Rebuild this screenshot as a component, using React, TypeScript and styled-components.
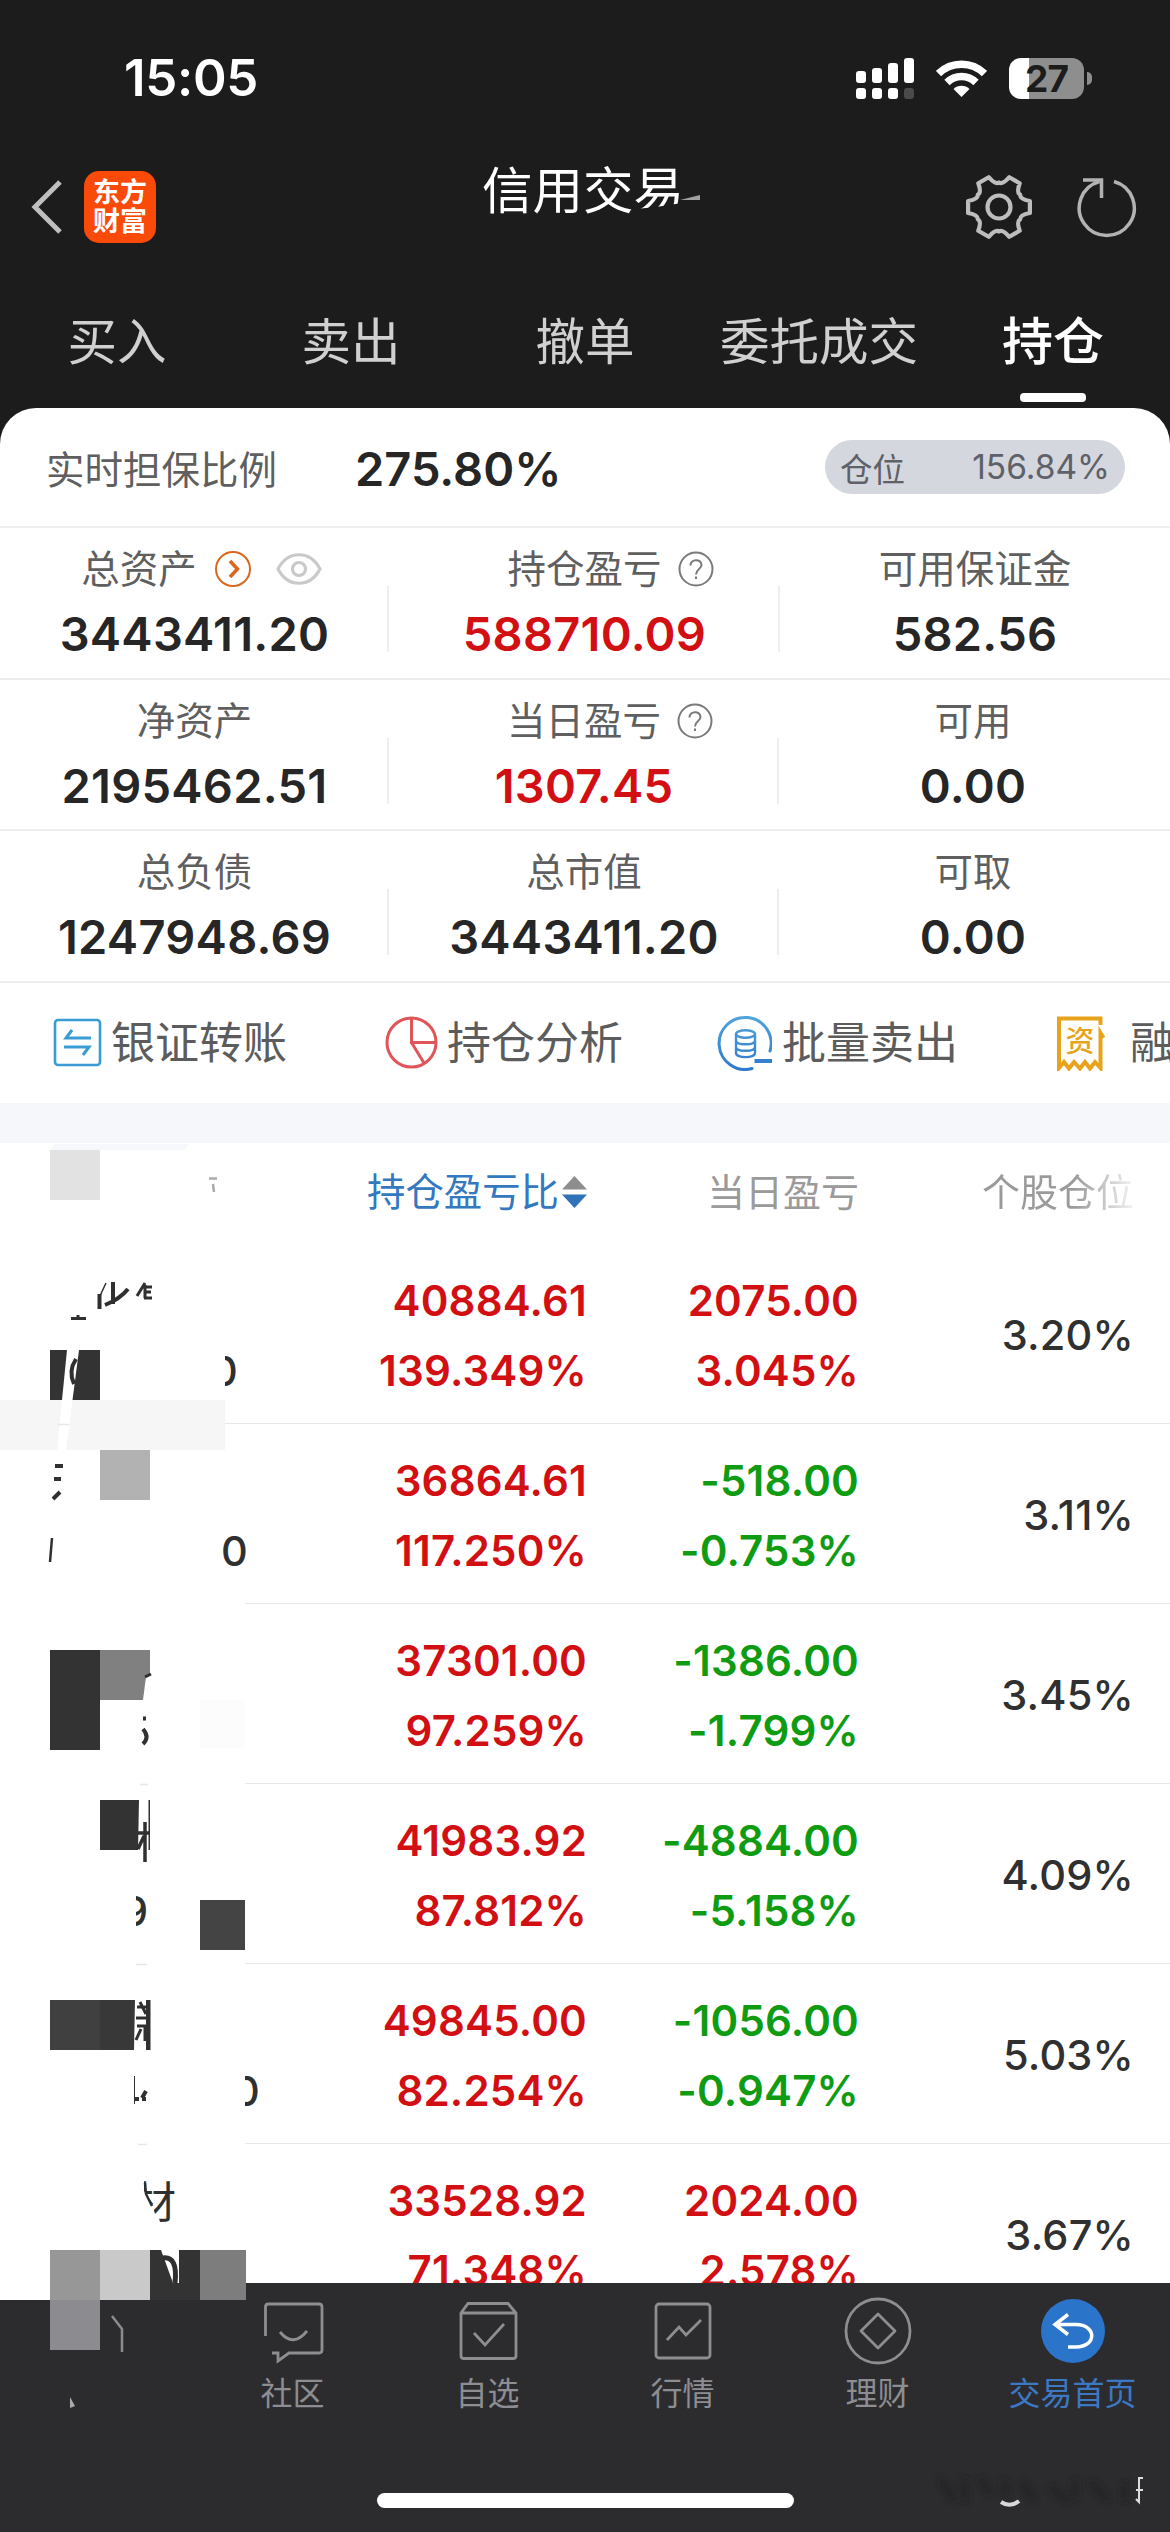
import React from "react";
import styled, { createGlobalStyle } from "styled-components";

const RED = "#d20f12";
const GREEN = "#0f9c12";
const INK = "#262626";

const GlobalStyle = createGlobalStyle`
  * { box-sizing: border-box; }
  body {
    margin: 0;
    background: #fff;
    font-family: Inter, "Noto Sans CJK SC", sans-serif;
    font-kerning: normal;
  }
`;

const Page = styled.div`
  position: relative;
  width: 1170px;
  height: 2532px;
  overflow: hidden;
  display: flex;
  flex-direction: column;
  background: #1c1c1c;
`;

/* ---------- status bar ---------- */

const StatusBar = styled.div`
  height: 156px;
  flex: none;
  display: flex;
  align-items: center;
  justify-content: space-between;
  padding: 0 78px 0 124px;
`;

const Clock = styled.span`
  font-size: 51px;
  line-height: 60px;
  font-weight: 600;
  letter-spacing: -0.3px;
  color: #fff;
`;

const StatusIcons = styled.div`
  display: flex;
  align-items: center;
`;

const Signal = styled.svg`
  width: 58px;
  height: 41px;
  margin-right: 22px;
`;

const Wifi = styled.svg`
  width: 51px;
  height: 38px;
  margin-right: 22px;
`;

const Battery = styled.div`
  width: 75px;
  height: 41px;
  border-radius: 12px;
  background: linear-gradient(to right, #fff 20px, #8e8e8e 20px);
  color: #1c1c1c;
  font-size: 37px;
  line-height: 41px;
  font-weight: 700;
  text-align: center;
  letter-spacing: -1px;
`;

const BatteryNub = styled.span`
  width: 5px;
  height: 13px;
  margin-left: 3px;
  border-radius: 0 5px 5px 0;
  background: #8e8e8e;
`;

/* ---------- title bar ---------- */

const TitleBar = styled.div`
  height: 102px;
  flex: none;
  display: grid;
  grid-template-columns: 390px 390px 390px;
`;

const TitleLeft = styled.div`
  display: flex;
  align-items: center;
  padding-left: 30px;
  gap: 20px;
`;

const Chevron = styled.svg`
  width: 34px;
  height: 56px;
`;

const AppBadge = styled.div`
  width: 72px;
  height: 72px;
  border-radius: 15px;
  background: #fa4a0a;
  color: #fff;
  font-weight: 700;
  font-size: 27px;
  line-height: 29px;
  padding-top: 7px;
  text-align: center;
`;

const Title = styled.div`
  position: relative;
  text-align: center;
  font-size: 50.5px;
  line-height: 70px;
  color: #fff;
  padding-right: 4px;
  font-weight: 400;
`;

const TitleSmudge = styled.svg`
  position: absolute;
  left: 246px;
  top: 35px;
  width: 72px;
  height: 32px;
`;

const TitleActions = styled.div`
  display: flex;
  align-items: center;
  justify-content: flex-end;
  padding-right: 29px;
  gap: 41px;
`;

const Gear = styled.svg`
  width: 70px;
  height: 70px;
`;

const Refresh = styled.svg`
  width: 66px;
  height: 66px;
`;

/* ---------- tabs ---------- */

const Tabs = styled.div`
  height: 150px;
  flex: none;
  display: grid;
  grid-template-columns: repeat(5, 234px);
`;

const Tab = styled.div<{ $active?: boolean }>`
  display: flex;
  flex-direction: column;
  align-items: center;
  padding-top: 54px;
  font-size: ${(p) => (p.$active ? 51 : 49.5)}px;
  line-height: 60px;
  color: ${(p) => (p.$active ? "#fff" : "#d0d0d0")};
  font-weight: ${(p) => (p.$active ? 500 : 400)};

  &::after {
    content: "";
    display: ${(p) => (p.$active ? "block" : "none")};
    width: 66px;
    height: 9px;
    margin-top: 21px;
    border-radius: 4px;
    background: #fff;
  }
`;

/* ---------- account summary ---------- */

const Sheet = styled.main`
  height: 1875px;
  flex: none;
  overflow: hidden;
  background: #fff;
  border-radius: 36px 36px 0 0;
`;

const RatioRow = styled.div`
  height: 120px;
  display: flex;
  align-items: center;
  padding: 0 45px 0 46px;
  border-bottom: 2px solid #efefef;
  color: #5f5f5f;
  font-size: 38.5px;
`;

const RatioValue = styled.strong`
  margin: 3px 0 0 78px;
  font-size: 47px;
  font-weight: 600;
  color: ${INK};
`;

const PositionPill = styled.div`
  margin-left: auto;
  width: 300px;
  height: 54px;
  border-radius: 27px;
  padding: 0 15px;
  display: flex;
  align-items: center;
  justify-content: space-between;
  background: #d4d7dd;
  color: #5f6168;
  font-size: 32.5px;
`;

const PillValue = styled.span`
  font-size: 33.5px;
`;

const StatsRow = styled.section<{ $wide?: boolean }>`
  height: 151.6px;
  display: grid;
  grid-template-columns: ${(p) => (p.$wide ? "389px 391px 390px" : "389px 390px 388px")};
  border-bottom: 2px solid #ededed;
`;

const Stat = styled.div`
  display: flex;
  flex-direction: column;
  align-items: center;
  padding-top: 19px;
  background: linear-gradient(#eeeeee, #eeeeee) right 58px / 2px 66px no-repeat;

  &:last-child { background: none; }
`;

const StatLabel = styled.div`
  position: relative;
  display: flex;
  align-items: center;
  height: 44px;
  font-size: 38.5px;
  line-height: 44px;
  color: #5f5f5f;
`;

const LabelIcons = styled.span`
  position: absolute;
  left: 100%;
  top: 4px;
  padding-left: 16px;
  display: flex;
`;

const InlineIcons = styled.span`
  display: flex;
  align-items: center;
  gap: 24px;
  padding-left: 17px;
  margin-right: -14px;
`;

const StatValue = styled.div<{ $color?: string }>`
  margin-top: 15px;
  font-size: 47px;
  line-height: 56px;
  font-weight: 600;
  letter-spacing: 0.25px;
  color: ${(p) => p.$color ?? INK};
`;

/* ---------- shortcuts ---------- */

const Shortcuts = styled.div`
  height: 120px;
  display: flex;
  padding-left: 50px;
`;

const Shortcut = styled.div<{ $gap?: number }>`
  flex: none;
  width: 333px;
  display: flex;
  align-items: center;
  gap: ${(p) => p.$gap ?? 5}px;
  font-size: 44px;
  line-height: 60px;
  color: #5c5c5c;
  white-space: nowrap;
`;

const ShortcutIcon = styled.svg`
  width: 56px;
  height: 56px;
  flex: none;
`;

const Spacer = styled.div`
  height: 40px;
  background: #f6f7fa;
`;

/* ---------- holdings ---------- */

const columns = "587px 272px 275px 36px";

const TableHead = styled.div`
  height: 101px;
  display: grid;
  grid-template-columns: ${columns};
  font-size: 38px;
  line-height: 98px;
  color: #9a9a9a;
  text-align: right;
`;

const SortHead = styled.div`
  display: flex;
  justify-content: flex-end;
  align-items: center;
  gap: 3px;
  color: #3478bf;
  height: 98px;
  font-size: 38.4px;
`;

const SortArrows = styled.svg`
  width: 25px;
  height: 32px;
`;

const FadingHead = styled.div`
  background: linear-gradient(to right, #9a9a9a 215px, #f4f4f4 275px);
  background-clip: text;
  -webkit-background-clip: text;
  color: transparent;
`;

const HoldingRow = styled.div<{ $lineStart: number }>`
  height: 180px;
  display: grid;
  grid-template-columns: ${columns};
  text-align: right;
  font-size: 42px;
  font-weight: 600;
  background: linear-gradient(#e8e8e8, #e8e8e8) ${(p) => p.$lineStart}px 179px / 1170px 2px no-repeat;
`;

const Pair = styled.div<{ $color: string }>`
  padding-top: 22px;
  line-height: 70px;
  letter-spacing: 0.2px;
  color: ${(p) => p.$color};
`;

const Share = styled.div`
  padding-top: 56px;
  line-height: 70px;
  font-weight: 550;
  font-size: 41.5px;
  letter-spacing: 0.2px;
  color: #303030;
`;

/* ---------- bottom navigation ---------- */

const NavBar = styled.nav`
  height: 249px;
  flex: none;
  display: grid;
  grid-template-columns: repeat(6, 195px);
  background: #2c2c2e;
`;

const NavItem = styled.div<{ $active?: boolean }>`
  display: flex;
  flex-direction: column;
  align-items: center;
  padding-top: 13px;
  font-size: 32px;
  line-height: 40px;
  gap: 8px;
  color: ${(p) => (p.$active ? "#3c78c4" : "#8d8d92")};
`;

const NavIcon = styled.svg`
  width: 70px;
  height: 70px;
  fill: none;
  stroke: #8d8d92;
  stroke-width: 2.8;
`;

const HomeIndicator = styled.div`
  position: absolute;
  left: 377px;
  top: 2493px;
  width: 417px;
  height: 15px;
  border-radius: 8px;
  background: #fff;
`;

/* ---------- masking over the name column ---------- */

const MaskLayer = styled.svg`
  position: absolute;
  left: 0;
  top: 0;
  width: 1170px;
  height: 2532px;
  pointer-events: none;
`;

const Shard = styled.span<{ $x: number; $y: number; $w: number; $h: number; $shift?: number; $size?: number }>`
  position: absolute;
  left: ${(p) => p.$x}px;
  top: ${(p) => p.$y}px;
  width: ${(p) => p.$w}px;
  height: ${(p) => p.$h}px;
  overflow: hidden;
  text-indent: ${(p) => p.$shift ?? 0}px;
  font-size: ${(p) => p.$size ?? 41.5}px;
  line-height: ${(p) => p.$h}px;
  font-weight: ${(p) => (p.$size ? 400 : 500)};
  color: #303030;
  white-space: nowrap;
`;

const CutShard = styled(Shard)`
  clip-path: polygon(0 0, 100% 0, 100% 100%, 15px 100%, 8px 27px, 0 14px);
`;

const tiles: [number, number, number, number, string][] = [
  [50, 1150, 50, 50, "#e2e2e2"],
  [50, 1350, 50, 50, "#333"],
  [0, 1400, 225, 50, "#f6f6f6"],
  [100, 1450, 50, 50, "#b2b2b2"],
  [50, 1650, 50, 100, "#333"],
  [100, 1650, 50, 50, "#808080"],
  [200, 1700, 45, 48, "#fcfcfc"],
  [100, 1800, 50, 50, "#333"],
  [200, 1900, 45, 50, "#444"],
  [50, 2000, 50, 50, "#404040"],
  [100, 2000, 50, 50, "#383838"],
  [0, 2283, 50, 17, "#fff"],
  [50, 2250, 50, 50, "#979797"],
  [100, 2250, 50, 50, "#c9c9c9"],
  [150, 2250, 50, 50, "#333"],
  [200, 2250, 46, 50, "#7d7d7d"],
  [50, 2300, 50, 50, "#8c8b90"],
];

function Masking() {
  return (
    <>
      <MaskLayer viewBox="0 0 1170 2532">
        <path d="M55 1144H190L184 1150H50Z" fill="#f7f8fb" />
        {tiles.map(([x, y, w, h, fill]) => (
          <rect key={`${x}-${y}`} x={x} y={y} width={w} height={h} fill={fill} />
        ))}
        <g fill="#fff">
          <path d="M67 1350H79L66 1450H57Z" />
          <path d="M146 1677L150 1675V1700H143Z" />
          <path d="M139 1800H148.500V1850H138Z" />
          <path d="M135 2000H146V2050H134Z" />
          <path d="M161 2250H179V2283H173Z" />
        </g>
        <g fill="none" stroke="#303030" strokeWidth="4">
          <path d="M106 1283L99 1298" strokeWidth="1.500" />
          <path d="M99.500 1294V1309M113 1282V1304M128 1289Q120 1299 105 1305" />
          <path d="M145 1283L137 1296M145 1285V1298M144 1287H152M144 1292H151M144 1298H152" strokeWidth="3" />
          <path d="M71 1318.500H86M78 1315V1318" strokeWidth="3" />
          <path d="M76 1359Q68 1371 74 1384" />
          <path d="M55 1466H63M54 1479H61M60 1492L53 1499" />
          <path d="M52 1538L50 1562" strokeWidth="2.500" />
          <path d="M145 1677L151 1674" strokeWidth="3" />
          <path d="M143 1718.500H146M143 1729Q150 1737 143 1744" />
          <path d="M145 1822V1862M138 1833H150M144 1836L138 1849" strokeWidth="3.500" />
          <path d="M137 2007H147M140 2002L146 2014M136 2018H147M137 2026H147M141 2029L136 2040M145 2027V2041" strokeWidth="3" />
          <path d="M148.500 2000V2050" strokeWidth="4" />
          <path d="M134.500 2076V2104" strokeWidth="1" />
          <path d="M134 2099H139M142 2099H146M146 2091L142 2098" />
          <path d="M163 2258Q178 2256 175 2283" strokeWidth="5" />
        </g>
        <g stroke="#e8e8e8" strokeWidth="1.500">
          <path d="M58 1424.500H69M140 1784.500H148M136 1964.500H147M138 2144.500H147" />
        </g>
        <path d="M209 1178.500H217M213 1184L214 1192" stroke="#aaa" strokeWidth="2.500" fill="none" />
        <path d="M112 2316L122 2329V2352" stroke="#8c8b90" strokeWidth="2.500" fill="none" />
        <path d="M70 2397L75 2406L70 2408Z" fill="#aaa" />
        <filter id="soft" x="-20%" y="-40%" width="140%" height="180%">
          <feGaussianBlur stdDeviation="3" />
        </filter>
        <g filter="url(#soft)" stroke="#1e1e20" strokeWidth="6" fill="none" opacity="0.7">
          <path d="M940 2480L955 2500M965 2478V2502M980 2478L990 2494M1005 2480V2498M1022 2482L1034 2500M1050 2486L1068 2502M1075 2480V2500M1090 2482L1108 2500M1125 2482V2502" />
        </g>
        <path d="M1001 2502Q1010 2508 1019 2501" stroke="#d8d8d8" strokeWidth="4" fill="none" />
        <path d="M1138 2478H1143M1136 2490H1143M1139 2478V2502L1136 2499" stroke="#ddd" strokeWidth="2" fill="none" />
      </MaskLayer>
      <Shard $x={225} $y={1351} $w={30} $h={40} $shift={-14}>0</Shard>
      <Shard $x={221} $y={1531} $w={30} $h={40}>0</Shard>
      <Shard $x={136} $y={1891} $w={13} $h={40} $shift={-14}>9</Shard>
      <Shard $x={245} $y={2071} $w={30} $h={40} $shift={-12}>0</Shard>
      <CutShard $x={144} $y={2177} $w={40} $h={50} $shift={-11} $size={43}>材</CutShard>
      <MaskLayer viewBox="0 0 1170 2532">
        <path d="M145 2183L146 2194L152 2206" stroke="#303030" strokeWidth="2.500" fill="none" />
      </MaskLayer>
    </>
  );
}

/* ---------- small icons ---------- */

const Help = () => (
  <svg width="36" height="36" viewBox="0 0 36 36" fill="none" stroke="#7a7a7a" strokeWidth="2">
    <circle cx="18" cy="18" r="16.500" />
    <path d="M12.500 14.500C12.500 7.500 23.500 7.500 23.500 14C23.500 18 18 18 18 23.500" />
    <path d="M18 25.500V28" />
  </svg>
);

const GoCircle = () => (
  <svg width="38" height="38" viewBox="0 0 38 38" fill="none" stroke="#d9681d">
    <circle cx="19" cy="19" r="17" strokeWidth="2" />
    <path d="M16 11L23.500 19L16 27" strokeWidth="3.500" />
  </svg>
);

const Eye = () => (
  <svg width="46" height="34" viewBox="0 0 46 34" fill="none" stroke="#c9c9c9" strokeWidth="3.200">
    <path d="M2 17C12 -2 34 -2 44 17C34 36 12 36 2 17Z" />
    <circle cx="23" cy="17" r="6.500" />
  </svg>
);

function gearPath() {
  const c = 35;
  const pt = (r: number, deg: number) => {
    const a = (deg * Math.PI) / 180;
    return `${(c + r * Math.cos(a)).toFixed(1)} ${(c + r * Math.sin(a)).toFixed(1)}`;
  };
  let d = "";
  for (let i = 0; i < 6; i++) {
    const a = i * 60;
    d += `${i ? "L" : "M"}${pt(31.5, a - 11)}L${pt(31.5, a + 11)}`;
    d += `C${pt(25, a + 17)} ${pt(23, a + 24)} ${pt(24.5, a + 30)}`;
    d += `C${pt(23, a + 36)} ${pt(25, a + 43)} ${pt(31.5, a + 49)}`;
  }
  return d + "Z";
}

const holdings = [
  { profit: "40884.61", rate: "139.349%", day: "2075.00", dayRate: "3.045%", share: "3.20%", line: 225 },
  { profit: "36864.61", rate: "117.250%", day: "-518.00", dayRate: "-0.753%", share: "3.11%", line: 245 },
  { profit: "37301.00", rate: "97.259%", day: "-1386.00", dayRate: "-1.799%", share: "3.45%", line: 245 },
  { profit: "41983.92", rate: "87.812%", day: "-4884.00", dayRate: "-5.158%", share: "4.09%", line: 245 },
  { profit: "49845.00", rate: "82.254%", day: "-1056.00", dayRate: "-0.947%", share: "5.03%", line: 245 },
  { profit: "33528.92", rate: "71.348%", day: "2024.00", dayRate: "2.578%", share: "3.67%", line: 245 },
];

export default function App() {
  return (
    <Page>
      <GlobalStyle />
      <StatusBar>
        <Clock>15:05</Clock>
        <StatusIcons>
          <Signal viewBox="0 0 58 41" fill="#fff">
            <rect x="0" y="13" width="10" height="12" rx="3" />
            <rect x="16" y="10" width="10" height="15" rx="3" />
            <rect x="32" y="5" width="10" height="20" rx="3" />
            <rect x="48" y="0" width="10" height="25" rx="3" />
            <rect x="0" y="30" width="10" height="11" rx="3" />
            <rect x="16" y="30" width="10" height="11" rx="3" />
            <rect x="32" y="30" width="10" height="11" rx="3" />
            <rect x="48" y="30" width="10" height="11" rx="3" fill="#4a4a4a" />
          </Signal>
          <Wifi viewBox="0 0 51 38">
            <path d="M2.500 14.500A33 33 0 0 1 48.500 14.500" fill="none" stroke="#fff" strokeWidth="7.500" />
            <path d="M11 23.500A20.500 20.500 0 0 1 40 23.500" fill="none" stroke="#fff" strokeWidth="7.500" />
            <path d="M25.500 38L17.500 30A11.500 11.500 0 0 1 33.500 30Z" fill="#fff" />
          </Wifi>
          <Battery>27</Battery>
          <BatteryNub />
        </StatusIcons>
      </StatusBar>

      <TitleBar>
        <TitleLeft>
          <Chevron viewBox="0 0 34 56" fill="none" stroke="#bfbfbf" strokeWidth="5">
            <path d="M30 3L5 28L30 53" />
          </Chevron>
          <AppBadge>
            东方
            <br />
            财富
          </AppBadge>
        </TitleLeft>
        <Title>
          信用交易
          <TitleSmudge viewBox="0 0 72 32">
            <path d="M0 18L20 16L46 12V32H0Z" fill="#1c1c1c" />
            <path d="M44 9L64 4V9Z" fill="#a0a0a0" />
          </TitleSmudge>
        </Title>
        <TitleActions>
          <Gear viewBox="0 0 70 70" fill="none" stroke="#bdbdbd" strokeWidth="4.200" strokeLinejoin="round">
            <path d={gearPath()} />
            <circle cx="35" cy="35" r="11.500" />
          </Gear>
          <Refresh viewBox="0 0 66 66" fill="none" stroke="#b2b2b2" strokeWidth="3.500">
            <path d="M39 7.500A27.500 27.500 0 1 1 24.500 7.500" />
            <path d="M8 6H26.500V24" />
          </Refresh>
        </TitleActions>
      </TitleBar>

      <Tabs>
        <Tab>买入</Tab>
        <Tab>卖出</Tab>
        <Tab>撤单</Tab>
        <Tab>委托成交</Tab>
        <Tab $active>持仓</Tab>
      </Tabs>

      <Sheet>
        <RatioRow>
          实时担保比例
          <RatioValue>275.80%</RatioValue>
          <PositionPill>
            <span>仓位</span>
            <PillValue>156.84%</PillValue>
          </PositionPill>
        </RatioRow>

        <StatsRow $wide>
          <Stat>
            <StatLabel>
              总资产
              <InlineIcons>
                <GoCircle />
                <Eye />
              </InlineIcons>
            </StatLabel>
            <StatValue>3443411.20</StatValue>
          </Stat>
          <Stat>
            <StatLabel>
              持仓盈亏
              <LabelIcons><Help /></LabelIcons>
            </StatLabel>
            <StatValue $color={RED}>588710.09</StatValue>
          </Stat>
          <Stat>
            <StatLabel>可用保证金</StatLabel>
            <StatValue>582.56</StatValue>
          </Stat>
        </StatsRow>
        <StatsRow>
          <Stat>
            <StatLabel>净资产</StatLabel>
            <StatValue>2195462.51</StatValue>
          </Stat>
          <Stat>
            <StatLabel>
              当日盈亏
              <LabelIcons><Help /></LabelIcons>
            </StatLabel>
            <StatValue $color={RED}>1307.45</StatValue>
          </Stat>
          <Stat>
            <StatLabel>可用</StatLabel>
            <StatValue>0.00</StatValue>
          </Stat>
        </StatsRow>
        <StatsRow>
          <Stat>
            <StatLabel>总负债</StatLabel>
            <StatValue>1247948.69</StatValue>
          </Stat>
          <Stat>
            <StatLabel>总市值</StatLabel>
            <StatValue>3443411.20</StatValue>
          </Stat>
          <Stat>
            <StatLabel>可取</StatLabel>
            <StatValue>0.00</StatValue>
          </Stat>
        </StatsRow>

        <Shortcuts>
          <Shortcut>
            <ShortcutIcon viewBox="0 0 56 56" fill="none" stroke="#3a9bd5" strokeWidth="2.600">
              <rect x="5" y="5" width="45" height="45" rx="3" />
              <path d="M22 15L16 23H41M14 32H39L33 40" strokeWidth="3" />
            </ShortcutIcon>
            银证转账
          </Shortcut>
          <Shortcut $gap={8}>
            <ShortcutIcon viewBox="0 0 56 56" fill="none" stroke="#df5558" strokeWidth="3">
              <circle cx="28.500" cy="27.500" r="24.500" />
              <path d="M28.500 3V27.500H53M28.500 27.500L41 48" />
            </ShortcutIcon>
            持仓分析
          </Shortcut>
          <Shortcut $gap={10}>
            <ShortcutIcon viewBox="0 0 56 56" fill="none" stroke="url(#blueFade)" strokeWidth="3" strokeLinecap="round">
              <linearGradient id="blueFade" gradientUnits="userSpaceOnUse" x1="0" y1="0" x2="0" y2="56">
                <stop offset="0" stopColor="#52a5dc" />
                <stop offset="1" stopColor="#2d78cc" />
              </linearGradient>
              <path d="M54 36A26 26 0 1 0 36 53.500" />
              <ellipse cx="29.500" cy="19" rx="9.500" ry="3.800" strokeWidth="2.400" />
              <path d="M20 19V38C20 43.500 39 43.500 39 38V19M20 25.500C20 30.500 39 30.500 39 25.500M20 32C20 37 39 37 39 32" strokeWidth="2.400" />
              <rect x="40" y="45.500" width="15" height="1" strokeWidth="3" />
            </ShortcutIcon>
            批量卖出
          </Shortcut>
          <Shortcut $gap={25}>
            <ShortcutIcon viewBox="0 0 56 56" fill="none" stroke="#e8a31c" strokeWidth="4">
              <path d="M51.500 10V3.500H10V53L15 47L20 53.500L25 47L31 53.500L36 47L41 53.500L46 47L51.500 53V18L54.500 23" />
              <text x="31" y="37" fill="#e8a31c" stroke="none" fontSize="29" fontWeight="500" textAnchor="middle">资</text>
            </ShortcutIcon>
            融
          </Shortcut>
        </Shortcuts>
        <Spacer />

        <TableHead>
          <SortHead>
            持仓盈亏比
            <SortArrows viewBox="0 0 25 32">
              <path d="M12.500 0L25 13.500H0Z" fill="#8e8e8e" />
              <path d="M12.500 32L25 18.500H0Z" fill="#2f72b8" />
            </SortArrows>
          </SortHead>
          <div>当日盈亏</div>
          <FadingHead>个股仓位</FadingHead>
        </TableHead>

        {holdings.map((h) => (
          <HoldingRow key={h.profit} $lineStart={h.line}>
            <Pair $color={RED}>
              {h.profit}
              <br />
              {h.rate}
            </Pair>
            <Pair $color={h.day.startsWith("-") ? GREEN : RED}>
              {h.day}
              <br />
              {h.dayRate}
            </Pair>
            <Share>{h.share}</Share>
          </HoldingRow>
        ))}
      </Sheet>

      <NavBar>
        <NavItem />
        <NavItem>
          <NavIcon viewBox="0 0 70 70">
            <path d="M7.500 40V11Q7.500 8 10.500 8H61Q64 8 64 11V54Q64 57 61 57H31L20 65V57H14" />
            <path d="M22 36Q35 52 49 35" />
          </NavIcon>
          社区
        </NavItem>
        <NavItem>
          <NavIcon viewBox="0 0 70 70">
            <path d="M8 17L15 7.500H55L63 17V60Q63 62.500 60 62.500H11Q8 62.500 8 60ZM8 17H63" />
            <path d="M21 37L32 49L51 28" />
          </NavIcon>
          自选
        </NavItem>
        <NavItem>
          <NavIcon viewBox="0 0 70 70">
            <rect x="8" y="8" width="54" height="54" rx="3" />
            <path d="M19 44L31 31L38 39L53 24" />
          </NavIcon>
          行情
        </NavItem>
        <NavItem>
          <NavIcon viewBox="0 0 70 70">
            <circle cx="35" cy="35" r="32" />
            <path d="M35 18L52 35L35 52L18 35Z" strokeLinejoin="round" />
          </NavIcon>
          理财
        </NavItem>
        <NavItem $active>
          <NavIcon viewBox="0 0 70 70">
            <circle cx="35" cy="35" r="32" fill="#2a74c9" stroke="none" />
            <path d="M30 18.500L17 28.500L30 38.500M17 28.500H38C59 28.500 59 51 38 51H30" stroke="#fff" strokeWidth="3.500" />
          </NavIcon>
          交易首页
        </NavItem>
      </NavBar>

      <HomeIndicator />
      <Masking />
    </Page>
  );
}
